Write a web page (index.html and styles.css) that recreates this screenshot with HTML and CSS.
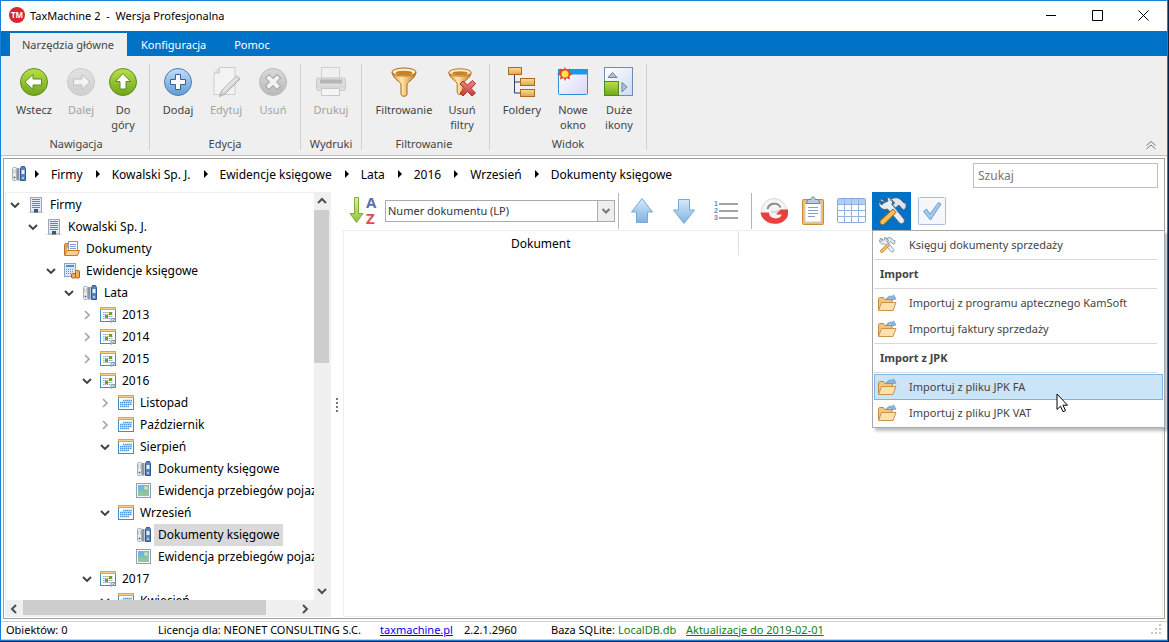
FILE: index.html
```html
<!DOCTYPE html>
<html lang="pl">
<head>
<meta charset="utf-8">
<title>TaxMachine 2 - Wersja Profesjonalna</title>
<link rel="stylesheet" href="styles.css">
</head>
<body>
<svg class="defs" aria-hidden="true">
  <defs>
    <linearGradient id="gGreen" x1="0" y1="0" x2="0" y2="1"><stop offset="0" stop-color="#b9e04a"/><stop offset="1" stop-color="#6fa51c"/></linearGradient>
    <linearGradient id="gGrey" x1="0" y1="0" x2="0" y2="1"><stop offset="0" stop-color="#e2e2e2"/><stop offset="1" stop-color="#cfcfcf"/></linearGradient>
    <linearGradient id="gDark" x1="0" y1="0" x2="0" y2="1"><stop offset="0" stop-color="#dadada"/><stop offset="1" stop-color="#b9b9b9"/></linearGradient>
    <linearGradient id="gBlue" x1="0" y1="0" x2="0" y2="1"><stop offset="0" stop-color="#c3dff5"/><stop offset="1" stop-color="#5e9bd6"/></linearGradient>
    <linearGradient id="gGold" x1="0" y1="0" x2="1" y2="0"><stop offset="0" stop-color="#d98f2c"/><stop offset=".4" stop-color="#ffe7a8"/><stop offset="1" stop-color="#c57a1d"/></linearGradient>
    <linearGradient id="gBox" x1="0" y1="0" x2="0" y2="1"><stop offset="0" stop-color="#fbdc9a"/><stop offset="1" stop-color="#e5a440"/></linearGradient>
    <linearGradient id="gPale" x1="0" y1="0" x2="1" y2="1"><stop offset="0" stop-color="#ffffff"/><stop offset="1" stop-color="#cbdcf2"/></linearGradient>
    <linearGradient id="gWin" x1="0" y1="0" x2="1" y2="1"><stop offset="0" stop-color="#ffffff"/><stop offset="1" stop-color="#d9d6fb"/></linearGradient>
    <linearGradient id="gArrow" x1="0" y1="0" x2="0" y2="1"><stop offset="0" stop-color="#d5e9fa"/><stop offset="1" stop-color="#7fb3e2"/></linearGradient>
    <linearGradient id="gLime" x1="0" y1="0" x2="0" y2="1"><stop offset="0" stop-color="#e0efa6"/><stop offset="1" stop-color="#8fc03a"/></linearGradient>
    <linearGradient id="gRed" x1="0" y1="0" x2="0" y2="1"><stop offset="0" stop-color="#f08a80"/><stop offset="1" stop-color="#c63a34"/></linearGradient>
    <symbol id="building" viewBox="0 0 16 16"><path d="M0 15.500h16" stroke="#dbe6d4"/><rect x="2.500" y=".5" width="11" height="14.500" fill="#e3edf9" stroke="#98a8bc"/><path d="M4 2.500h8M4 4.500h8M4 6.500h8M4 8.500h8M4 10.500h8" stroke="#3f8fd8"/><rect x="6" y="12" width="4" height="3.500" fill="#44546b"/></symbol>
    <symbol id="binders" viewBox="0 0 16 16"><rect x="1.500" y="1.500" width="4" height="13" rx="1" fill="#eef0f2" stroke="#a5adb6"/><rect x="6" y="2" width="2.500" height="12.500" fill="#8b96a3"/><path d="M2.500 4h2v3h-2z" fill="#fff" stroke="#9aa3ad" stroke-width=".5"/><circle cx="3.500" cy="11.500" r="1" fill="#666"/><path d="M9.500 2.500L10.500.5h3l1 2v12h-5z" fill="#5585c0" stroke="#34588d"/><path d="M10.500 4h3v4h-3z" fill="#e7f1fb"/><circle cx="12" cy="12" r="1" fill="#cfe0f2"/></symbol>
    <symbol id="docfolder" viewBox="0 0 16 16"><path d="M.5 14V3.500l1-1h3V5" fill="#e8a14c" stroke="#b9742a"/><rect x="4.500" y=".5" width="9" height="10" fill="#fff" stroke="#7c97c9"/><path d="M6 3.500h6M6 5.500h6M6 7.500h6" stroke="#7f9ed2"/><path d="M.5 14.500l2.500-5h12.500l-2 5z" fill="#fbd08c" stroke="#c47c2b"/></symbol>
    <symbol id="calc" viewBox="0 0 16 16"><rect x=".5" y=".5" width="11" height="13" fill="#dce7f5" stroke="#8ba2c0"/><rect x="2" y="2" width="8" height="2" fill="#4d8fd2"/><path d="M2.500 6v6M4.500 6v6M6.500 6v6M8.500 6v4" stroke="#7694ba" stroke-dasharray="1 1"/><rect x="7.500" y="10.500" width="4" height="4.500" rx="1" fill="#f0b05a" stroke="#a9601c"/><rect x="11.500" y="7.500" width="4" height="7.500" rx="1" fill="#f0b05a" stroke="#a9601c"/></symbol>
    <symbol id="year" viewBox="0 0 16 16"><rect x=".5" y=".5" width="15" height="14" fill="#fff" stroke="#3d8fc4"/><path d="M0 1.500h16" stroke="#ff9a26" stroke-width="3"/><path d="M1 1.500h14" stroke="#ffd08e"/><path d="M3 5.500h10M3 7.500h10M3 9.500h10M3 11.500h7" stroke="#9aabb5" stroke-dasharray="1.500 .5"/><rect x="9" y="5" width="3" height="3" fill="#73a500"/><rect x="5" y="8" width="3" height="3" fill="#73a500"/><path d="M11 15.500v-4h4.500z" fill="#d6e4f4" stroke="#7c9cc0"/></symbol>
    <symbol id="month" viewBox="0 0 16 16"><rect x=".5" y=".5" width="15" height="14" fill="#fff" stroke="#3d8fc4"/><path d="M0 1.500h16" stroke="#ff9a26" stroke-width="3"/><path d="M1 1.500h14" stroke="#ffd08e"/><path d="M5 5.500h9M2 7.500h12M2 9.500h12M2 11.500h9" stroke="#4e9bdf" stroke-width="1.500" stroke-dasharray="1.600 .4"/></symbol>
    <symbol id="picture" viewBox="0 0 16 16"><rect x=".5" y=".5" width="14" height="14" fill="#f3f6fa" stroke="#8fa0b5"/><rect x="2" y="2" width="11" height="11" fill="#74b3e5"/><path d="M2 13V8.500l3-1.500 5 2 3-4.500V13z" fill="#93c59a"/><circle cx="10" cy="5" r="2" fill="#dfe08a"/></symbol>
    <symbol id="open" viewBox="0 0 10 10"><path d="M1 3l4 4 4-4" fill="none" stroke="#404040" stroke-width="1.900"/></symbol>
    <symbol id="closed" viewBox="0 0 10 10"><path d="M3 1l4 4-4 4" fill="none" stroke="#a6a6a6" stroke-width="1.700"/></symbol>
    <symbol id="tri" viewBox="0 0 4 8"><path d="M0 0l4 4-4 4z"/></symbol>
    <symbol id="import" viewBox="0 0 20 18"><path d="M1.500 16V4.500l1-1h4l1.500 2h7V9" fill="#f3c47c" stroke="#c08a44"/><path d="M1.500 16.500l3-8h14.500l-3 8z" fill="#fde0ab" stroke="#c9944c"/><path d="M9 6c1-3.500 4-4.500 6.500-3.500L16.500.8 19 5l-4.800 1 .8-1.600C13 3.500 11 4 9 6z" fill="#8db9e6" stroke="#5e8fc0" stroke-width=".7"/></symbol>
    <symbol id="tools" viewBox="0 0 32 32"><path d="M3 5l3-1 3 3.500L12 6l-1-3c4-1 6.500 3 5 6.500L28 24c1.500 3-1.500 6-4.500 4L11.500 14C7 16 2 12 3 7l2.500 3 3-2.500z" fill="#e7edf4" stroke="#56657c"/><path d="M17 14l3 3.500L8.500 29c-2.500 2-6-1-4-3.500z" fill="#f5bd54" stroke="#99601c"/><path d="M14 5c4-3 8-3 11 0l3 3 2 0v5l-2.500 2-3-3c-1-2-2-2-3-1l-2 2-3-3 2-2c-1-2-2-3-4.500-3z" fill="#dfe5ec" stroke="#56657c"/></symbol>
    <symbol id="funnel" viewBox="0 0 32 32"><path d="M4 6c1 8 9 9 9 13v9c0 3 6 3 6 0v-9c0-4 8-5 9-13z" fill="url(#gGold)" stroke="#a8661a"/><ellipse cx="16" cy="6" rx="12" ry="4" fill="#ffefbf" stroke="#a8661a"/><ellipse cx="16" cy="7" rx="8.500" ry="2.300" fill="#c98129"/></symbol>
  </defs>
</svg>

<div class="window">
  <header class="titlebar">
    <svg class="logo" viewBox="0 0 16 16" aria-hidden="true"><circle cx="8" cy="8" r="8" fill="#d9252c"/><text class="logo-text" x="8" y="11" text-anchor="middle">TM</text></svg>
    <h1 class="title">TaxMachine 2 &nbsp;-&nbsp; Wersja Profesjonalna</h1>
    <button class="winbtn" aria-label="Minimalizuj"><svg viewBox="0 0 11 11"><path d="M0 5.500h10"/></svg></button>
    <button class="winbtn" aria-label="Maksymalizuj"><svg viewBox="0 0 11 11"><path d="M.5.5h10v10H.5z"/></svg></button>
    <button class="winbtn" aria-label="Zamknij"><svg viewBox="0 0 11 11"><path d="M.5.5l10 10M10.500.5l-10 10"/></svg></button>
  </header>

  <nav class="tabs">
    <button class="tab active">Narzędzia główne</button>
    <button class="tab">Konfiguracja</button>
    <button class="tab">Pomoc</button>
  </nav>

  <section class="ribbon">
    <div class="group first">
      <div class="tools">
        <button class="tool w48"><svg class="ico32" viewBox="0 0 32 32"><circle cx="16" cy="16" r="13.500" fill="url(#gGreen)" stroke="#5d8d1f"/><path d="M7 16l8-7.500V13h8.500v6H15v4.500z" fill="#fff" stroke="#5d8d1f"/></svg>Wstecz</button>
        <button class="tool w46" disabled><svg class="ico32" viewBox="0 0 32 32"><circle cx="16" cy="16" r="13.500" fill="url(#gGrey)" stroke="#cacaca"/><path d="M25 16l-8-7.500V13H8.500v6H17v4.500z" fill="#f3f3f3" stroke="#bdbdbd"/></svg>Dalej</button>
        <button class="tool w38"><svg class="ico32" viewBox="0 0 32 32"><circle cx="16" cy="16" r="13.500" fill="url(#gGreen)" stroke="#5d8d1f"/><path d="M16 7.500l7.500 8H19V23h-6v-7.500H8.500z" fill="#fff" stroke="#5d8d1f"/></svg>Do<br>góry</button>
      </div>
      <h2 class="group-name">Nawigacja</h2>
    </div>
    <div class="group">
      <div class="tools">
        <button class="tool w48"><svg class="ico32" viewBox="0 0 32 32"><circle cx="16" cy="16" r="13.500" fill="url(#gBlue)" stroke="#4a7fb5"/><path d="M13.500 8.500h5v5h5v5h-5v5h-5v-5h-5v-5h5z" fill="#fff" stroke="#33619a"/></svg>Dodaj</button>
        <button class="tool w48" disabled><svg class="ico32" viewBox="0 0 32 32"><path d="M9.500 1.500H25v27H4V7z" fill="#f3f3f3" stroke="#cdcdcd"/><path d="M9.500 1.500V7H4" fill="#dedede" stroke="#cdcdcd"/><path d="M26.500 10l3.500 3-15 15-5.500 2.500 2-5.500z" fill="#d5d5d5" stroke="#ababab"/><path d="M13 25.500l14-14" stroke="#ececec" stroke-width="1.500"/></svg>Edytuj</button>
        <button class="tool w46" disabled><svg class="ico32" viewBox="0 0 32 32"><circle cx="16" cy="16" r="13.500" fill="url(#gDark)" stroke="#bababa"/><path d="M12 12l8 8M20 12l-8 8" stroke="#a5a5a5" stroke-width="6" stroke-linecap="square"/><path d="M12 12l8 8M20 12l-8 8" stroke="#f2f2f2" stroke-width="4" stroke-linecap="square"/></svg>Usuń</button>
      </div>
      <h2 class="group-name">Edycja</h2>
    </div>
    <div class="group">
      <div class="tools">
        <button class="tool w52" disabled><svg class="ico32" viewBox="0 0 32 32"><path d="M6.500 13V1.500h18V13" fill="#f0f0f0" stroke="#d0d0d0"/><rect x="1.500" y="12" width="29" height="12.500" rx="2" fill="#dedede" stroke="#c8c8c8"/><path d="M5 13.500h22v4H5z" fill="#b5b5b5"/><path d="M2 21h28" stroke="#cfcfcf"/><path d="M6.500 22.500h18v7h-18z" fill="#f5f5f5" stroke="#c8c8c8"/></svg>Drukuj</button>
      </div>
      <h2 class="group-name">Wydruki</h2>
    </div>
    <div class="group roomy">
      <div class="tools">
        <button class="tool w76"><svg class="ico32" viewBox="0 0 32 32"><use href="#funnel"/></svg>Filtrowanie</button>
        <button class="tool w40"><svg class="ico32" viewBox="0 0 32 32"><svg x="1" y="1" width="26" height="29" viewBox="2 0 28 32" preserveAspectRatio="none"><use href="#funnel" width="32" height="32"/></svg><path d="M17 15l4.500 4 5-4.500 3 3-4.500 5 4.500 4.500-3.500 3-4.500-4.500L17 30l-3-3 4.500-5-4.500-4z" fill="url(#gRed)" stroke="#a12f2f"/></svg>Usuń<br>filtry</button>
      </div>
      <h2 class="group-name">Filtrowanie</h2>
    </div>
    <div class="group">
      <div class="tools">
        <button class="tool w56"><svg class="ico32" viewBox="0 0 32 32"><path d="M8.500 9v18H15M8.500 16H15" fill="none" stroke="#2b3f66"/><rect x="2.500" y="1.500" width="13" height="7" fill="url(#gBox)" stroke="#a96a1d"/><rect x="14.500" y="12.500" width="14" height="7" fill="url(#gBox)" stroke="#a96a1d"/><rect x="14.500" y="23.500" width="14" height="7" fill="url(#gBox)" stroke="#a96a1d"/></svg>Foldery</button>
        <button class="tool w46"><svg class="ico32" viewBox="0 0 32 32"><rect x="1.500" y="3.500" width="29" height="25" rx="1" fill="url(#gWin)" stroke="#2c8fd8"/><rect x="1" y="3" width="30" height="5.500" fill="#149bef"/><path d="M8 1l1.500 3L13 2.500 12.500 6 16 8l-3.500 2 .5 3.500L9.500 12 8 15l-1.500-3L3 13.500 3.500 10 0 8l3.500-2L3 2.500 6.500 4z" fill="#e8462a"/><circle cx="8" cy="8" r="3.500" fill="#ffe34a"/></svg>Nowe<br>okno</button>
        <button class="tool w46"><svg class="ico32" viewBox="0 0 32 32"><rect x="1.500" y="1.500" width="28" height="28" fill="url(#gPale)" stroke="#6f8cb8"/><path d="M5 11.500l4.500-5 4.500 5z" fill="#b5c1d0" stroke="#6c7f97"/><path d="M19 16.500l5 4.500-5 5z" fill="#b5c1d0" stroke="#6c7f97"/><rect x="1.500" y="15.500" width="14" height="14" fill="url(#gGreen)" stroke="#4f8a1c"/></svg>Duże<br>ikony</button>
      </div>
      <h2 class="group-name">Widok</h2>
    </div>
    <button class="collapse" aria-label="Zwiń wstążkę"><svg viewBox="0 0 12 10"><path d="M1.500 5.500L6 1.500l4.500 4M1.500 9L6 5l4.500 4"/></svg></button>
  </section>

  <main class="frame">
    <div class="pathbar">
      <nav class="crumbs">
        <svg class="ico16"><use href="#binders"/></svg>
        <svg class="tri"><use href="#tri"/></svg><span>Firmy</span>
        <svg class="tri"><use href="#tri"/></svg><span>Kowalski Sp. J.</span>
        <svg class="tri"><use href="#tri"/></svg><span>Ewidencje księgowe</span>
        <svg class="tri"><use href="#tri"/></svg><span>Lata</span>
        <svg class="tri"><use href="#tri"/></svg><span>2016</span>
        <svg class="tri"><use href="#tri"/></svg><span>Wrzesień</span>
        <svg class="tri"><use href="#tri"/></svg><span>Dokumenty księgowe</span>
      </nav>
      <input class="search" type="text" placeholder="Szukaj" aria-label="Szukaj">
    </div>

    <div class="panes">
      <aside class="side">
        <div class="side-top">
          <ul class="tree">
            <li class="row l0"><button class="toggle" aria-label="Zwiń"><svg><use href="#open"/></svg></button><svg class="ico16"><use href="#building"/></svg><span class="label">Firmy</span></li>
            <li class="row l1"><button class="toggle" aria-label="Zwiń"><svg><use href="#open"/></svg></button><svg class="ico16"><use href="#building"/></svg><span class="label">Kowalski Sp. J.</span></li>
            <li class="row l2"><span class="toggle"></span><svg class="ico16"><use href="#docfolder"/></svg><span class="label">Dokumenty</span></li>
            <li class="row l2"><button class="toggle" aria-label="Zwiń"><svg><use href="#open"/></svg></button><svg class="ico16"><use href="#calc"/></svg><span class="label">Ewidencje księgowe</span></li>
            <li class="row l3"><button class="toggle" aria-label="Zwiń"><svg><use href="#open"/></svg></button><svg class="ico16"><use href="#binders"/></svg><span class="label">Lata</span></li>
            <li class="row l4"><button class="toggle" aria-label="Rozwiń"><svg><use href="#closed"/></svg></button><svg class="ico16"><use href="#year"/></svg><span class="label">2013</span></li>
            <li class="row l4"><button class="toggle" aria-label="Rozwiń"><svg><use href="#closed"/></svg></button><svg class="ico16"><use href="#year"/></svg><span class="label">2014</span></li>
            <li class="row l4"><button class="toggle" aria-label="Rozwiń"><svg><use href="#closed"/></svg></button><svg class="ico16"><use href="#year"/></svg><span class="label">2015</span></li>
            <li class="row l4"><button class="toggle" aria-label="Zwiń"><svg><use href="#open"/></svg></button><svg class="ico16"><use href="#year"/></svg><span class="label">2016</span></li>
            <li class="row l5"><button class="toggle" aria-label="Rozwiń"><svg><use href="#closed"/></svg></button><svg class="ico16"><use href="#month"/></svg><span class="label">Listopad</span></li>
            <li class="row l5"><button class="toggle" aria-label="Rozwiń"><svg><use href="#closed"/></svg></button><svg class="ico16"><use href="#month"/></svg><span class="label">Październik</span></li>
            <li class="row l5"><button class="toggle" aria-label="Zwiń"><svg><use href="#open"/></svg></button><svg class="ico16"><use href="#month"/></svg><span class="label">Sierpień</span></li>
            <li class="row l6"><span class="toggle"></span><svg class="ico16"><use href="#binders"/></svg><span class="label">Dokumenty księgowe</span></li>
            <li class="row l6"><span class="toggle"></span><svg class="ico16"><use href="#picture"/></svg><span class="label">Ewidencja przebiegów pojazdów</span></li>
            <li class="row l5"><button class="toggle" aria-label="Zwiń"><svg><use href="#open"/></svg></button><svg class="ico16"><use href="#month"/></svg><span class="label">Wrzesień</span></li>
            <li class="row l6"><span class="toggle"></span><svg class="ico16"><use href="#binders"/></svg><span class="label selected">Dokumenty księgowe</span></li>
            <li class="row l6"><span class="toggle"></span><svg class="ico16"><use href="#picture"/></svg><span class="label">Ewidencja przebiegów pojazdów</span></li>
            <li class="row l4"><button class="toggle" aria-label="Zwiń"><svg><use href="#open"/></svg></button><svg class="ico16"><use href="#year"/></svg><span class="label">2017</span></li>
            <li class="row l5"><button class="toggle" aria-label="Zwiń"><svg><use href="#open"/></svg></button><svg class="ico16"><use href="#month"/></svg><span class="label">Kwiecień</span></li>
          </ul>
          <div class="vscroll">
            <svg viewBox="0 0 10 10"><path d="M1 7l4-4 4 4"/></svg>
            <div class="vtrack"><div class="vthumb"></div></div>
            <svg viewBox="0 0 10 10"><path d="M1 3l4 4 4-4"/></svg>
          </div>
        </div>
        <div class="hscroll">
          <svg viewBox="0 0 10 10"><path d="M7 1L3 5l4 4"/></svg>
          <div class="htrack"><div class="hthumb"></div></div>
          <svg viewBox="0 0 10 10"><path d="M3 1l4 4-4 4"/></svg>
        </div>
      </aside>

      <div class="splitter"><i></i><i></i><i></i><i></i></div>

      <section class="content">
        <div class="toolbar">
          <button class="tb sort" aria-label="Sortuj"><svg viewBox="0 0 30 30"><path d="M6.500 1.500h4v16H15L8.500 26.500 2 17.500h4.500z" fill="url(#gLime)" stroke="#7eaa3c"/><text class="az" x="18" y="12" fill="#5b6fae">A</text><text class="az" x="18" y="28" fill="#d9504e">Z</text></svg></button>
          <div class="combo">
            <select aria-label="Sortowanie"><option>Numer dokumentu (LP)</option></select>
            <span class="drop"><svg viewBox="0 0 10 10"><path d="M1.500 3L5 6.500 8.500 3"/></svg></span>
          </div>
          <i class="sep"></i>
          <button class="tb up" aria-label="W górę"><svg viewBox="0 0 30 30"><path d="M15 2.500L25.500 16H20.500V26.500h-11V16H4.500z" fill="url(#gArrow)" stroke="#7ba7d3"/></svg></button>
          <button class="tb down" aria-label="W dół"><svg viewBox="0 0 30 30"><path d="M15 27.500L25.500 14H20.500V3.500h-11V14H4.500z" fill="url(#gArrow)" stroke="#7ba7d3"/></svg></button>
          <button class="tb" aria-label="Numeracja"><svg viewBox="0 0 30 30"><path d="M8 8h19M8 15h19M8 22h19" stroke="#a3a3a3" stroke-width="2"/><text class="num" x="3" y="10">1</text><text class="num" x="3" y="17">2</text><text class="num" x="3" y="24">3</text></svg></button>
          <i class="sep"></i>
          <button class="tb" aria-label="Eksport"><svg viewBox="0 0 30 30"><circle cx="15" cy="15" r="12.500" fill="#f4f4f4" stroke="#dadada"/><path d="M1.500 16.500h8.500c0 7.500 12 7.500 12.500 2h-5.500l4.500-5h7.500v5c-2 12.500-25 13-27.500-2z" fill="#e8403f"/><path d="M8.500 13a7 7 0 0 1 13-1.500" fill="none" stroke="#888" stroke-width="1.800"/><path d="M12 16h6l1.500-2" fill="none" stroke="#bbb"/></svg></button>
          <button class="tb" aria-label="Schowek"><svg viewBox="0 0 30 30"><rect x="4.500" y="3.500" width="21" height="25" rx="1" fill="#eebc6d" stroke="#c58c3b"/><rect x="7" y="7" width="16" height="19" fill="#fff" stroke="#c9cfd8"/><path d="M10 3.500h3c0-3.500 4-3.500 4 0h3l2 4H8z" fill="#b9cbe0" stroke="#6d84a3"/><path d="M10 11.500h10M10 14.500h10M10 17.500h10M10 20.500h7" stroke="#7f9fc8"/></svg></button>
          <button class="tb grid" aria-label="Tabela"><svg viewBox="0 0 30 30"><rect x=".5" y="2.500" width="28" height="24" rx="1" fill="#fcfdff" stroke="#8ea9d8"/><path d="M1 3h27v5H1z" fill="#a9d3f3"/><path d="M1 8.500h27M1 14.500h27M1 20.500h27M7.500 3v23M14.500 3v23M21.500 3v23" stroke="#98b1dc"/></svg></button>
          <div class="dropdown">
            <button class="tb on" aria-label="Narzędzia"><svg viewBox="0 0 32 32"><use href="#tools"/></svg></button>
            <div class="menu">
              <div class="items">
                <button class="item"><svg viewBox="0 0 32 32"><use href="#tools"/></svg>Księguj dokumenty sprzedaży</button>
              </div>
              <h3>Import</h3>
              <div class="items">
                <button class="item"><svg><use href="#import"/></svg>Importuj z programu aptecznego KamSoft</button>
                <button class="item"><svg><use href="#import"/></svg>Importuj faktury sprzedaży</button>
              </div>
              <h3>Import z JPK</h3>
              <div class="items">
                <button class="item hover"><svg><use href="#import"/></svg>Importuj z pliku JPK FA<svg class="cursor" viewBox="0 0 13 20"><path d="M1 1v15.500l3.500-3.300 2.500 5.500 2.500-1-2.500-5.500h4.500z" fill="#fff" stroke="#000"/></svg></button>
                <button class="item"><svg><use href="#import"/></svg>Importuj z pliku JPK VAT</button>
              </div>
            </div>
          </div>
          <button class="tb check" aria-label="Zaznacz"><svg viewBox="0 0 30 30"><rect x="1.500" y="1.500" width="27" height="27" rx="1" fill="#f4f8fd" stroke="#a9bddc"/><path d="M6.500 15.500l3-2.500 3.500 5L21.500 6.500l2.500 1.500L13.500 24z" fill="#a3c8ec" stroke="#6f9fd2"/></svg></button>
        </div>
        <div class="list">
          <table>
            <thead><tr><th class="doc">Dokument</th><th></th></tr></thead>
          </table>
        </div>
      </section>
    </div>
  </main>

  <footer class="status">
    <span class="s1">Obiektów: 0</span>
    <span class="s2">Licencja dla: NEONET CONSULTING S.C.</span>
    <span class="s3"><a class="blue" href="#">taxmachine.pl</a></span>
    <span class="s4">2.2.1.2960</span>
    <span class="s5">Baza SQLite:</span>
    <span class="s6 green">LocalDB.db</span>
    <span class="s7"><a class="green" href="#">Aktualizacje do 2019-02-01</a></span>
    <svg class="grip" viewBox="0 0 12 12"><path d="M8 0h2v2H8zM4 4h2v2H4zM8 4h2v2H8zM0 8h2v2H0zM4 8h2v2H4zM8 8h2v2H8z"/></svg>
  </footer>
</div>
</body>
</html>
```
FILE: styles.css
```css
* { box-sizing: border-box; }

body {
  margin: 0;
  height: 100vh;
  padding: 0 1px 1px 0;
  background: #04244a;
  font: 12px/15px "Noto Sans", "Open Sans", sans-serif;
  color: #000;
  overflow: hidden;
}

button, input, select { font: inherit; color: inherit; }
button { margin: 0; padding: 0; border: 0; background: none; }
svg { display: block; flex: none; }
.defs { position: absolute; width: 0; height: 0; }
h1, h2, h3 { margin: 0; font: inherit; }

.window {
  display: flex;
  flex-direction: column;
  height: 100%;
  border: 1px solid #1a7fd6;
  background: #fff;
}

.titlebar { display: flex; align-items: center; height: 30px; padding: 0 1px 2px 8px; font-size: 11px; }
.logo { width: 16px; height: 16px; }
.logo-text { font: bold 8px "Open Sans", sans-serif; fill: #fff; }
.title { flex: 1; padding-left: 5px; }
.winbtn { display: grid; place-items: center; width: 46px; height: 28px; }
.winbtn svg { width: 11px; height: 11px; fill: none; stroke: #000; }

.tabs { display: flex; align-items: flex-end; height: 25px; padding-left: 9px; background: #0072c6; color: #fff; }
.tab { height: 23px; padding: 0 14px; font-size: 11px; }
.tab.active { padding: 0 13px 0 12px; background: #efefef; color: #444; }

.ribbon { display: flex; height: 100px; padding: 8px 0 5px; border-bottom: 1px solid #c0c0c0; background: #efefef; color: #444; font-size: 11px; }
.group { display: flex; flex-direction: column; justify-content: space-between; padding: 0 4px; border-right: 1px solid #cfcfcf; }
.group.first { padding: 0 7px 0 9px; }
.group.roomy { padding-right: 7px; }
.tools { display: flex; padding-top: 2px; }
.tool { display: flex; flex-direction: column; align-items: center; justify-content: flex-start; height: 68px; line-height: 15px; }
.tool:disabled { color: #a3a3a3; }
.w38 { width: 38px; }
.w40 { width: 40px; }
.w46 { width: 46px; }
.w48 { width: 48px; }
.w52 { width: 52px; }
.w56 { width: 56px; }
.w76 { width: 76px; }
.ico32 { width: 32px; height: 32px; margin-bottom: 4px; }
.group-name { line-height: 12px; text-align: center; }
.collapse { margin: auto 10px 0 auto; }
.collapse svg { width: 12px; height: 10px; fill: none; stroke: #777; }

.frame { display: flex; flex: 1; flex-direction: column; min-height: 0; margin: 2px; padding: 0 1px 1px; border: 1px solid #a0a0a0; }
.pathbar { display: flex; align-items: center; justify-content: space-between; height: 33px; padding: 0 5px 1px 6px; }
.crumbs { display: flex; align-items: center; gap: 12px; padding-bottom: 2px; white-space: nowrap; }
.ico16 { width: 16px; height: 16px; }
.crumbs .ico16 { margin-right: -4px; }
.tri { width: 4px; height: 8px; }
span + .tri { margin-left: 1px; }
.search { width: 185px; height: 25px; padding: 0 4px; border: 1px solid #bdbdbd; outline: 0; background: #fff; }
.search::placeholder { color: #777; opacity: 1; }

.panes { display: flex; flex: 1; min-height: 0; }
.side { display: flex; flex-direction: column; width: 326px; }
.side-top { display: flex; flex: 1; min-height: 0; }
.tree { flex: 1; min-width: 0; margin: 0; padding: 1px 0 0; overflow: hidden; border: solid #eee; border-width: 1px 0 0 1px; list-style: none; }
.row { display: flex; align-items: center; height: 22px; white-space: nowrap; }
.l1 { padding-left: 18px; }
.l2 { padding-left: 36px; }
.l3 { padding-left: 54px; }
.l4 { padding-left: 72px; }
.l5 { padding-left: 90px; }
.l6 { padding-left: 108px; }
.toggle { display: grid; flex: none; place-items: center; width: 18px; margin-right: 4px; }
.toggle svg { width: 10px; height: 10px; }
.label { margin-left: 2px; padding: 0 4px; line-height: 22px; }
.selected { background: #d9d9d9; }

.vscroll { display: flex; flex-direction: column; align-items: center; width: 17px; padding-right: 2px; background: #f0f0f0; }
.vscroll svg, .hscroll svg { width: 10px; height: 10px; margin: 4px; fill: none; stroke: #505050; stroke-width: 2; }
.vtrack { flex: 1; align-self: stretch; }
.vthumb { height: 41%; background: #cdcdcd; }
.hscroll { display: flex; align-items: center; height: 17px; padding-right: 17px; background: #f0f0f0; }
.htrack { flex: 1; align-self: stretch; }
.hthumb { width: 89%; height: 15px; background: #cdcdcd; }

.splitter { display: flex; flex-direction: column; align-items: center; justify-content: center; gap: 2px; width: 12px; }
.splitter i { width: 2px; height: 2px; background: #777; }

.content { display: flex; flex: 1; flex-direction: column; min-width: 0; }
.toolbar { display: flex; align-items: center; height: 38px; padding-left: 5px; }
.tb { display: grid; place-items: center; width: 30px; height: 38px; margin-right: 9px; }
.tb svg { width: 30px; height: 30px; }
.tb.sort { margin-right: 7px; }
.tb.up { margin-left: 4px; margin-right: 12px; }
.tb.down { margin-right: 12px; }
.tb + .sep { margin-left: 1px; margin-right: 7px; }
.tb.grid { margin-right: 5px; }
.az { font: bold 15px "Open Sans", sans-serif; }
.num { font: bold 7px "Liberation Sans", sans-serif; fill: #5f8fc4; }
.combo { position: relative; width: 230px; height: 22px; }
.combo select { width: 100%; height: 100%; padding: 0 20px 1px 2px; border: 1px solid #ababab; border-radius: 0; appearance: none; background: #fff; color: #333; font-size: 11px; }
.drop { position: absolute; top: 0; right: 0; display: grid; place-items: center; width: 18px; height: 22px; border: 1px solid #ababab; background: #eee; pointer-events: none; }
.drop svg { width: 10px; height: 10px; fill: none; stroke: #777; stroke-width: 2; }
.sep { width: 1px; height: 36px; margin: 0 4px 0 3px; background: #b5b5b5; }
.dropdown { position: relative; }
.tb.on { width: 39px; margin-right: 6px; background: #0072c6; }
.tb.on svg { width: 32px; height: 32px; }

.menu { position: absolute; z-index: 2; top: 38px; left: 0; width: 293px; border: 1px solid #a8a8a8; background: #fff; box-shadow: 3px 3px 3px rgba(0, 0, 0, .25); color: #444; font-size: 11px; }
.menu h3 { margin: 0 7px 0 1px; padding-left: 6px; border: solid #d9d9d9; border-width: 1px 0; font-weight: bold; line-height: 28px; }
.items { padding: 1px; }
.item { position: relative; display: flex; align-items: center; width: 100%; height: 26px; padding: 0 0 1px 2px; border: 1px solid transparent; text-align: left; }
.item svg { width: 20px; height: 18px; margin-right: 12px; }
.item.hover { border-color: #7eb4ea; background: #cce4f7; }
.item .cursor { position: absolute; top: 18px; left: 181px; z-index: 3; width: 13px; height: 20px; margin: 0; }

.list { flex: 1; border: 1px solid #eee; }
.list table { width: 100%; border-collapse: collapse; table-layout: fixed; }
.list th { height: 24px; padding: 0; font-weight: normal; }
.list .doc { width: 394px; border-right: 1px solid #e2e2e2; }

.status { display: flex; align-items: center; height: 19px; padding: 0 4px 2px 5px; border: solid #d0d0d0; border-width: 1px 0; font-size: 11px; white-space: nowrap; }
.s1 { width: 152px; }
.s2 { width: 222px; }
.s3 { width: 84px; }
.s4 { width: 87px; }
.s5 { width: 67px; }
.s6 { width: 68px; }
.blue { color: #0000f0; }
.green { color: #108010; }
.grip { width: 12px; height: 12px; margin-left: auto; fill: #c8c8c8; }
```
